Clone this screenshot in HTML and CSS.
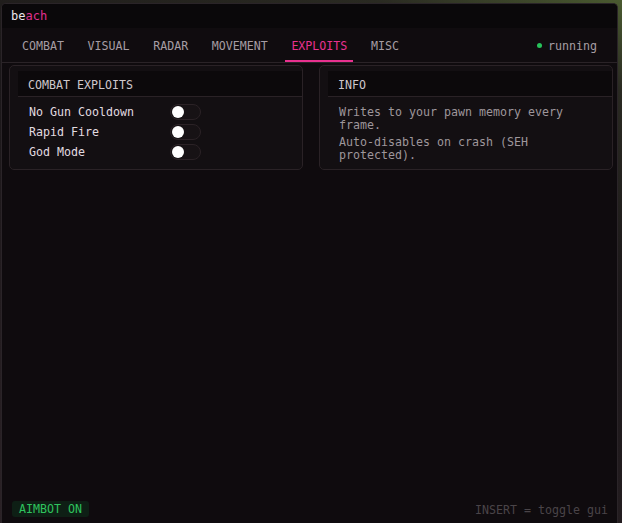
FILE: index.html
```html
<!DOCTYPE html>
<html lang="en">
<head>
    <meta charset="UTF-8">
    <title>beach</title>
    <link rel="stylesheet" href="styles.css">
</head>
<body>
    <div class="window">
        <header class="titlebar">
            <span class="brand">be<span class="accent">ach</span></span>
        </header>

        <nav class="tabs">
            <span class="tab">COMBAT</span>
            <span class="tab">VISUAL</span>
            <span class="tab">RADAR</span>
            <span class="tab">MOVEMENT</span>
            <span class="tab active">EXPLOITS</span>
            <span class="tab">MISC</span>
            <span class="status"><span class="dot"></span>running</span>
        </nav>

        <main class="content">
            <section class="card">
                <div class="card-head">COMBAT EXPLOITS</div>
                <div class="card-body">
                    <div class="row">
                        <span class="label">No Gun Cooldown</span>
                        <span class="toggle"><span class="knob"></span></span>
                    </div>
                    <div class="row">
                        <span class="label">Rapid Fire</span>
                        <span class="toggle"><span class="knob"></span></span>
                    </div>
                    <div class="row">
                        <span class="label">God Mode</span>
                        <span class="toggle"><span class="knob"></span></span>
                    </div>
                </div>
            </section>

            <section class="card">
                <div class="card-head">INFO</div>
                <div class="card-body info">
                    <p>Writes to your pawn memory every frame.</p>
                    <p>Auto-disables on crash (SEH protected).</p>
                </div>
            </section>
        </main>

        <footer class="footer">
            <span class="badge">AIMBOT ON</span>
            <span class="hint">INSERT = toggle gui</span>
        </footer>
    </div>
</body>
</html>
```

FILE: styles.css
```css
body {
    margin: 0;
    height: 523px;
    overflow: hidden;
    background: linear-gradient(200deg, #4a5a30 0%, #2a2a22 12%, #1b1719 40%, #2b2226 100%);
    font-family: "DejaVu Sans Mono", "Liberation Mono", monospace;
    font-size: 11.63px;
}

.window {
    margin: 3px 4px 0 1px;
    height: 520px;
    box-sizing: border-box;
    border: 1px solid #2a2428;
    border-bottom: none;
    border-radius: 5px 5px 0 0;
    background-color: #0f0b0e;
    display: flex;
    flex-direction: column;
    overflow: hidden;
}

/* title bar */
.titlebar {
    height: 24px;
    background-color: #0a080a;
    display: flex;
    align-items: center;
    padding-left: 9px;
    font-size: 12px;
}

.brand {
    color: #ece6ea;
}

.accent {
    color: #e0308f;
}

/* tabs */
.tabs {
    height: 35px;
    box-sizing: border-box;
    background-color: #100c0f;
    border-bottom: 1px solid #2a2327;
    display: flex;
    align-items: stretch;
    padding-left: 14px;
    gap: 11.6px;
}

.tab {
    display: flex;
    align-items: center;
    padding: 3px 6px 0 6px;
    color: #a69da3;
    border-bottom: 2px solid transparent;
}

.tab.active {
    color: #e8318f;
    border-bottom-color: #e8318f;
}

.status {
    margin-left: auto;
    margin-right: 20px;
    display: flex;
    align-items: center;
    color: #a69da3;
    padding-top: 2px;
}

.dot {
    width: 5px;
    height: 5px;
    border-radius: 50%;
    background-color: #27c25a;
    margin-right: 6px;
    margin-bottom: 2px;
}

/* content */
.content {
    flex: 1;
    display: grid;
    grid-template-columns: 294px 294px;
    gap: 16px;
    align-items: start;
    padding: 2px 0 0 7px;
}

.card {
    border: 1px solid #2a2226;
    border-radius: 5px;
    background-color: #130f12;
    height: 105px;
    box-sizing: border-box;
    padding-top: 5px;
}

.card-head {
    margin-left: 8px;
    height: 26px;
    box-sizing: border-box;
    background-color: #0c090b;
    border-bottom: 1px solid #2a2226;
    display: flex;
    align-items: center;
    padding: 2px 0 0 10px;
    color: #cfc7cc;
}

.card-body {
    padding: 5px 0 0 19px;
}

.row {
    height: 20px;
    display: flex;
    align-items: center;
    color: #e2dbe0;
}

.label {
    width: 141px;
}

.toggle {
    width: 28px;
    height: 14px;
    border: 1px solid #2b2226;
    border-radius: 8px;
    background-color: #171215;
    display: flex;
    align-items: center;
    padding-left: 1px;
}

.knob {
    width: 12px;
    height: 12px;
    border-radius: 50%;
    background-color: #ffffff;
}

.info {
    padding: 9px 40px 0 19px;
    color: #9e969b;
    line-height: 13px;
}

.info p {
    margin: 0 0 4px 0;
}

/* footer */
.footer {
    height: 22px;
    display: flex;
    align-items: flex-start;
    justify-content: space-between;
    padding: 0 9px 0 10px;
}

.badge {
    background-color: #0e1f15;
    color: #2fc35e;
    border-radius: 3px;
    padding: 1px 7px 1px 7px;
    line-height: 14px;
}

.hint {
    color: #4a4448;
    padding-top: 2px;
}
```
